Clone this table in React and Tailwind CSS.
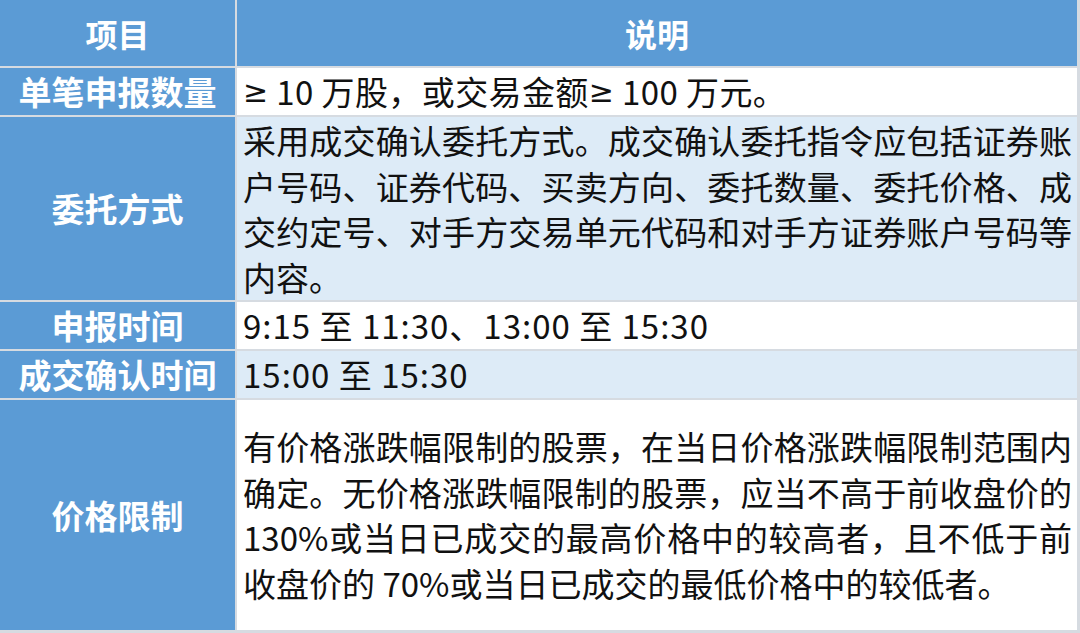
import React from "react";

const FONT = { fontFamily: '"Noto Sans CJK SC", "Noto Sans", sans-serif' };

const LABEL = "flex items-center justify-center bg-[#5b9bd5] text-white font-bold text-[33px] leading-none";
const HEAD = "flex items-center justify-center bg-[#5b9bd5] text-white font-bold text-[32px] leading-none";

function Ge() {
  return <span className="font-['DejaVu_Sans',sans-serif] text-[30px]">≥</span>;
}

function Lines({ lines }) {
  return (
    <div className="w-full">
      {lines.map((l, i) => (
        <div
          key={i}
          className={
            i === lines.length - 1
              ? "leading-[45.5px] whitespace-nowrap"
              : "leading-[45.5px] whitespace-nowrap text-justify [text-align-last:justify]"
          }
        >
          {l}
        </div>
      ))}
    </div>
  );
}

export default function App() {
  return (
    <div style={FONT} className="w-[1080px] h-[633px] bg-[#d6dbe1] pr-[3px] pb-[3px] overflow-hidden">
      <div className="grid grid-cols-[235px_1fr] grid-rows-[66px_47px_183px_47px_47px_230px] gap-[2px] h-[630px]">
        <div className={HEAD}>项目</div>
        <div className={HEAD}>说明</div>

        <div className={LABEL}>单笔申报数量</div>
        <div className="bg-white flex items-center pl-[6px] text-[33px] text-[#111] whitespace-nowrap tracking-[0.4px]">
          <Ge />&nbsp;10 万股，或交易金额<Ge />&nbsp;100 万元。
        </div>

        <div className={LABEL}>委托方式</div>
        <div className="bg-[#ddebf7] pl-[6px] pr-[5px] pt-[1px] text-[33px] text-[#111]">
          <Lines
            lines={[
              "采用成交确认委托方式。成交确认委托指令应包括证券账",
              "户号码、证券代码、买卖方向、委托数量、委托价格、成",
              "交约定号、对手方交易单元代码和对手方证券账户号码等",
              "内容。",
            ]}
          />
        </div>

        <div className={LABEL}>申报时间</div>
        <div className="bg-white flex items-center pl-[6px] text-[33px] text-[#111] tracking-[1px]">
          9:15 至 11:30、13:00 至 15:30
        </div>

        <div className={LABEL}>成交确认时间</div>
        <div className="bg-[#ddebf7] flex items-center pl-[6px] text-[33px] text-[#111] tracking-[1px]">
          15:00 至 15:30
        </div>

        <div className={LABEL}>价格限制</div>
        <div className="bg-white flex items-center pl-[6px] pr-[5px] text-[33px] text-[#111]">
          <Lines
            lines={[
              "有价格涨跌幅限制的股票，在当日价格涨跌幅限制范围内",
              "确定。无价格涨跌幅限制的股票，应当不高于前收盘价的",
              "130%或当日已成交的最高价格中的较高者，且不低于前",
              "收盘价的 70%或当日已成交的最低价格中的较低者。",
            ]}
          />
        </div>
      </div>
    </div>
  );
}
